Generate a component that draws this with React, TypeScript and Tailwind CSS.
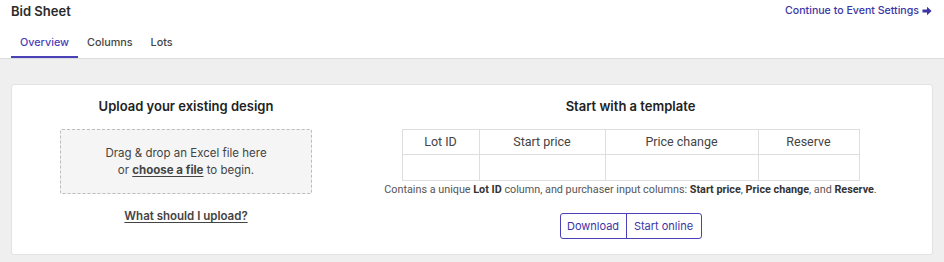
import React from 'react';

const columns = [
  { label: 'Lot ID', w: 'w-[77px]' },
  { label: 'Start price', w: 'w-[126px]' },
  { label: 'Price change', w: 'w-[153px]' },
  { label: 'Reserve', w: 'w-[101px]' },
];

const App: React.FC = () => {
  return (
    <div className="w-[944px] h-[262px] bg-[#efefef] font-['Inter',sans-serif] text-[#333]">
      {/* Header */}
      <div className="bg-white border-b border-[#dcdcdc] px-[11px]">
        <div className="flex items-start justify-between pt-[2px] h-[30px]">
          <h1 className="text-[13px] font-semibold text-[#2b2b2b] leading-[18px]">Bid Sheet</h1>
          <a className="flex items-center gap-[3px] text-[10.6px] font-medium text-[#3b35a6] leading-[18px] mr-[1px]">
            Continue to Event Settings
            <svg width="10" height="10" viewBox="0 0 10 10">
              <path d="M0.5 3.6 H5 V0.8 L9.6 5 L5 9.2 V6.4 H0.5 Z" fill="#3b35a6" />
            </svg>
          </a>
        </div>
        <div className="flex text-[10.8px] font-medium leading-[16px]">
          <div className="px-[9px] pt-[5px] pb-[5px] border-b-[2px] border-[#4a40b8] text-[#4a40b8]">Overview</div>
          <div className="px-[9px] pt-[5px] pb-[5px] text-[#444]">Columns</div>
          <div className="px-[9px] pt-[5px] pb-[5px] text-[#444]">Lots</div>
        </div>
      </div>

      {/* Card */}
      <div className="px-[11px] pt-[25px]">
        <div className="w-[922px] h-[171px] bg-white border border-[#e2e2e2] rounded-[3px] flex">
          {/* Upload */}
          <div className="w-[348px] flex flex-col items-center pt-[12px]">
            <h2 className="text-[13px] font-semibold text-[#222] leading-[18px]">Upload your existing design</h2>
            <div className="mt-[14px] w-[252px] h-[65px] border border-dashed border-[#bdbdbd] bg-[#f5f5f5] rounded-[2px] flex flex-col items-center justify-center text-[11.5px] text-[#444] leading-[17px]">
              <span>Drag &amp; drop an Excel file here</span>
              <span>
                or <span className="font-bold underline underline-offset-2">choose a file</span> to begin.
              </span>
            </div>
            <a className="mt-[14px] text-[11.5px] font-semibold underline underline-offset-2 text-[#444] leading-[17px]">
              What should I upload?
            </a>
          </div>

          {/* Template */}
          <div className="flex-1 flex flex-col items-center pt-[12px] pr-[31px]">
            <h2 className="text-[13px] font-semibold text-[#222] leading-[18px]">Start with a template</h2>
            <table className="mt-[14px] border-collapse font-['Roboto',sans-serif] text-[12.5px] text-[#444]">
              <tbody>
                <tr>
                  {columns.map((c) => (
                    <td key={c.label} className={`${c.w} h-[25px] border border-[#dedede] text-center font-normal`}>
                      {c.label}
                    </td>
                  ))}
                </tr>
                <tr>
                  {columns.map((c) => (
                    <td key={c.label} className="h-[26px] border border-[#dedede]"></td>
                  ))}
                </tr>
              </tbody>
            </table>
            <p className="mt-[2px] font-['Roboto',sans-serif] text-[10.8px] text-[#555] leading-[14px]">
              Contains a unique <b className="font-bold text-[#333]">Lot ID</b> column, and purchaser input columns:{' '}
              <b className="font-bold text-[#333]">Start price</b>, <b className="font-bold text-[#333]">Price change</b>, and{' '}
              <b className="font-bold text-[#333]">Reserve</b>.
            </p>
            <div className="mt-[16px] flex border border-[#4a40b8] rounded-[3px] text-[11px] text-[#3b35a6] leading-[16px]">
              <button className="w-[66px] h-[24px] border-r border-[#4a40b8]">Download</button>
              <button className="w-[74px] h-[24px]">Start online</button>
            </div>
          </div>
        </div>
      </div>
    </div>
  );
};

export default App;
